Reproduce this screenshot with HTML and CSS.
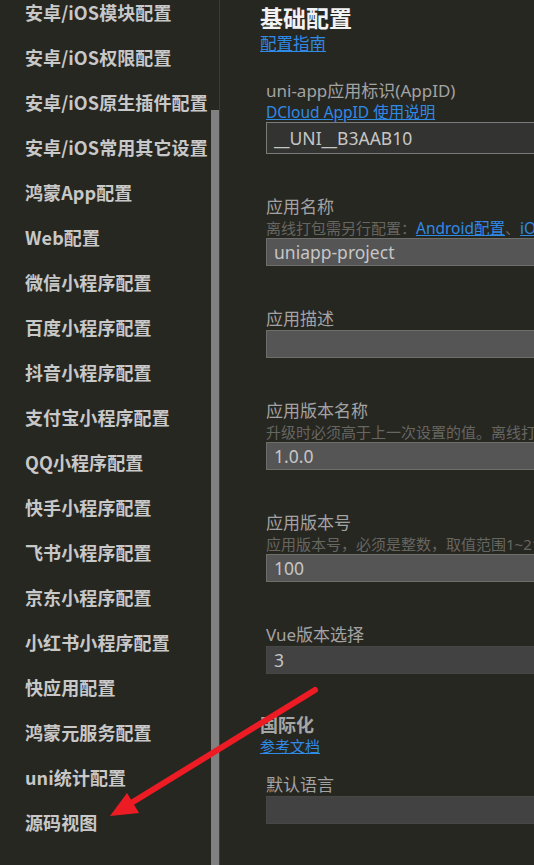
FILE: index.html
```html
<!DOCTYPE html>
<html lang="zh-CN">
<head>
<meta charset="utf-8">
<title>manifest</title>
<link rel="stylesheet" href="styles.css">
</head>
<body>
<div class="app">
  <aside class="sidebar">
    <ul class="nav">
      <li>安卓/iOS模块配置</li>
      <li>安卓/iOS权限配置</li>
      <li>安卓/iOS原生插件配置</li>
      <li>安卓/iOS常用其它设置</li>
      <li>鸿蒙App配置</li>
      <li>Web配置</li>
      <li>微信小程序配置</li>
      <li>百度小程序配置</li>
      <li>抖音小程序配置</li>
      <li>支付宝小程序配置</li>
      <li>QQ小程序配置</li>
      <li>快手小程序配置</li>
      <li>飞书小程序配置</li>
      <li>京东小程序配置</li>
      <li>小红书小程序配置</li>
      <li>快应用配置</li>
      <li>鸿蒙元服务配置</li>
      <li>uni统计配置</li>
      <li>源码视图</li>
    </ul>
    <div class="track"><div class="thumb"></div></div>
  </aside>
  <main class="main">
    <h1 class="title">基础配置</h1>
    <a class="doc-link guide" href="#">配置指南</a>

    <div class="field first">
      <div class="label">uni-app应用标识(AppID)</div>
      <a class="sub-link" href="#">DCloud AppID 使用说明</a>
      <div class="input dark tall">__UNI__B3AAB10</div>
    </div>

    <div class="field">
      <div class="label">应用名称</div>
      <div class="desc">离线打包需另行配置：<a class="sub-link inline" href="#">Android配置</a>、<a class="sub-link inline" href="#">iOS配置</a></div>
      <div class="input">uniapp-project</div>
    </div>

    <div class="field">
      <div class="label">应用描述</div>
      <div class="input"></div>
    </div>

    <div class="field">
      <div class="label">应用版本名称</div>
      <div class="desc">升级时必须高于上一次设置的值。离线打包需另行配置</div>
      <div class="input">1.0.0</div>
    </div>

    <div class="field">
      <div class="label">应用版本号</div>
      <div class="desc">应用版本号，必须是整数，取值范围1~2147483647</div>
      <div class="input">100</div>
    </div>

    <div class="field">
      <div class="label">Vue版本选择</div>
      <div class="input select">3</div>
    </div>

    <h2 class="section">国际化</h2>
    <a class="doc-link small" href="#">参考文档</a>

    <div class="field lang">
      <div class="label">默认语言</div>
      <div class="input select"></div>
    </div>
  </main>
</div>
<svg class="arrow" width="534" height="865" viewBox="0 0 534 865" xmlns="http://www.w3.org/2000/svg">
  <line x1="315" y1="690" x2="128" y2="805" stroke="#ed1c24" stroke-width="6" stroke-linecap="round"/>
  <polygon points="110,816 127,793 139,813" fill="#ed1c24"/>
</svg>
</body>
</html>
```
FILE: styles.css
```css
html, body {
  margin: 0;
  padding: 0;
  background: #272722;
  width: 534px;
  height: 865px;
  overflow: hidden;
  font-family: "Noto Sans", "Noto Sans CJK SC", sans-serif;
}

.app {
  display: flex;
  height: 865px;
}

.sidebar {
  width: 219px;
  flex: none;
  display: flex;
  border-right: 1px solid #3b3b37;
  overflow: hidden;
}

.nav {
  list-style: none;
  margin: -10px 0 0 0;
  padding: 0 0 0 25px;
  width: 186px;
  flex: none;
}

.nav li {
  height: 45px;
  line-height: 45px;
  font-family: "Noto Sans CJK SC", sans-serif;
  font-weight: 700;
  font-size: 18px;
  letter-spacing: 0.1px;
  color: #c8c8c8;
  white-space: nowrap;
}

.track {
  width: 8px;
  flex: none;
  display: flex;
  flex-direction: column;
}

.thumb {
  margin-top: 110px;
  flex: 1;
  background: #808080;
}

.main {
  flex: 1;
  min-width: 0;
  overflow: hidden;
  padding-left: 40px;
}

.title {
  margin: 0;
  padding-top: 4px;
  font-family: "Noto Sans CJK SC", sans-serif;
  font-size: 23px;
  line-height: 26px;
  font-weight: 700;
  color: #f2f2f2;
}

.doc-link {
  display: block;
  width: max-content;
  color: #2f8ae6;
  text-decoration: underline;
  font-family: "Noto Sans CJK SC", sans-serif;
  font-size: 16.5px;
  line-height: 22px;
}

.doc-link.guide {
  margin-top: 2px;
}

.doc-link.small {
  font-size: 15px;
  line-height: 20px;
}

.field {
  margin-left: 6px;
  margin-top: 42px;
}

.field.first {
  margin-top: 26px;
}

.field.lang {
  margin-top: 18px;
}

.label {
  font-size: 17px;
  line-height: 22px;
  color: #a3a3a3;
  white-space: nowrap;
}

.sub-link {
  display: block;
  width: max-content;
  color: #2f8ae6;
  text-decoration: underline;
  font-size: 15.5px;
  line-height: 20px;
  white-space: nowrap;
}

.sub-link.inline {
  display: inline;
  font-size: 15.5px;
}

.desc {
  font-size: 15px;
  line-height: 20px;
  color: #666661;
  white-space: nowrap;
}

.input {
  box-sizing: border-box;
  width: 600px;
  height: 28px;
  border: 1px solid #6e6e6b;
  background: #555555;
  color: #c6c6c6;
  font-size: 17.5px;
  line-height: 26px;
  padding-left: 7px;
  white-space: nowrap;
}

.input.dark {
  background: #333331;
  border-color: #7a7a78;
}

.input.tall {
  height: 32px;
  line-height: 30px;
}

.input.select {
  background: #424242;
  border-color: #474745;
}

.section {
  margin: 38px 0 0 0;
  font-family: "Noto Sans CJK SC", sans-serif;
  font-size: 18px;
  line-height: 24px;
  font-weight: 700;
  color: #a6a6a6;
}

.arrow {
  position: absolute;
  top: 0;
  left: 0;
  pointer-events: none;
}
```
